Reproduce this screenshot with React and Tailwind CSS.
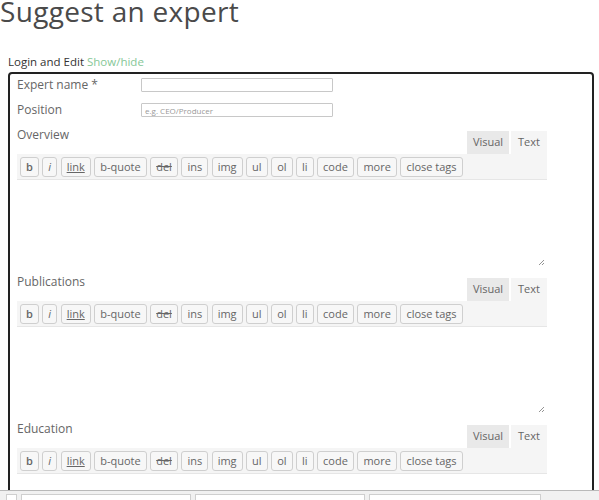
import React from "react";

const BUTTONS = ["b", "i", "link", "b-quote", "del", "ins", "img", "ul", "ol", "li", "code", "more", "close tags"];

function ToolButton({ label }) {
  let extra = "";
  if (label === "b") extra = "font-semibold";
  if (label === "i") extra = "italic";
  if (label === "link") extra = "underline";
  if (label === "del") extra = "line-through";
  return (
    <button className={`h-[20px] px-[5px] border border-[#cfcfcf] rounded-[3px] bg-[#f7f7f7] text-[11px] leading-none text-[#666] ${extra}`}>
      {label}
    </button>
  );
}

function Editor({ title, last }) {
  return (
    <div className="w-[530px]">
      <div className="flex justify-between items-start">
        <span className="text-[12px] leading-none text-[#666] -mt-[2px]">{title}</span>
        <div className="flex gap-[2px] text-[11px] text-[#666]">
          <div className="w-[42px] h-[23px] flex items-center justify-center bg-[#e9e9e9]">Visual</div>
          <div className="w-[36px] h-[23px] flex items-center justify-center bg-[#f5f5f5]">Text</div>
        </div>
      </div>
      <div className="h-[26px] bg-[#f5f5f5] border-b border-[#e6e6e6] flex items-center gap-[3.5px] px-[3px]">
        {BUTTONS.map((b) => (
          <ToolButton key={b} label={b} />
        ))}
      </div>
      {!last && (
        <div className="relative h-[88px] bg-white">
          <svg className="absolute right-[2px] bottom-[2px]" width="7" height="7" viewBox="0 0 7 7">
            <path d="M1 6 L6 1 M4 6 L6 4" stroke="#888" strokeWidth="0.9" />
          </svg>
        </div>
      )}
    </div>
  );
}

export default function App() {
  return (
    <div className="relative h-[500px] overflow-hidden bg-white font-['Open_Sans',sans-serif]">
      <div className="pt-[1px]">
        <h1 className="text-[28px] leading-[34px] -mt-[7px] text-[#4a4a4a] tracking-[0.3px]">Suggest an expert</h1>
      </div>

      <div className="mt-[27px] mb-[3px] ml-2 text-[11.5px] leading-[14px] text-[#333]">
        Login and Edit <span className="text-[#86c797]">Show/hide</span>
      </div>

      <div className="ml-2 mr-[5px] h-[440px] border-2 border-[#222] rounded-[4px] pl-[7px] pt-[3px]">
        <div className="flex items-center h-[16px]">
          <span className="w-[124px] text-[12px] text-[#666]">Expert name *</span>
          <input className="w-[192px] h-[14px] border border-[#c8c8c8] rounded-[1px] bg-white" />
        </div>
        <div className="flex items-center h-[16px] mt-[9px]">
          <span className="w-[124px] text-[12px] text-[#666]">Position</span>
          <input
            className="w-[192px] h-[14px] border border-[#c8c8c8] rounded-[1px] bg-white px-[3px] text-[8px] text-[#888] placeholder:text-[#999]"
            placeholder="e.g. CEO/Producer"
          />
        </div>

        <div className="mt-[13px] flex flex-col gap-[10px]">
          <Editor title="Overview" />
          <Editor title="Publications" />
          <Editor title="Education" last />
        </div>
      </div>

      <div className="fixed left-0 right-0 bottom-0 h-[10px] bg-[#f1f1f1] border-t border-[#b9b9b9] flex items-start pt-[3px] gap-[4px]">
        <div className="ml-[6px] w-[11px] h-[8px] border-l border-r border-t border-[#cfcfcf] bg-white" />
        <div className="w-[170px] h-[8px] border-l border-r border-t border-[#cfcfcf] bg-white" />
        <div className="w-[170px] h-[8px] border-l border-r border-t border-[#cfcfcf] bg-white" />
        <div className="w-[172px] h-[8px] border-l border-r border-t border-[#cfcfcf] bg-white" />
      </div>
    </div>
  );
}
